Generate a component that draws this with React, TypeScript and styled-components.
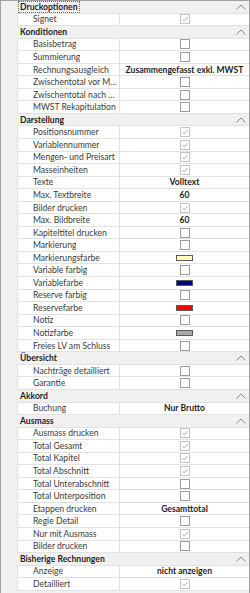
import React from 'react'
import styled, { createGlobalStyle } from 'styled-components'

const GlobalStyle = createGlobalStyle`
    html, body {
        margin: 0;
        padding: 0;
        background: #ffffff;
    }
`

type Kind = 'check' | 'text' | 'color'

interface Item {
    label: string;
    kind: Kind;
    checked?: boolean;
    text?: string;
    color?: string;
}

interface Category {
    title: string;
    focused?: boolean;
    items: Item[];
}

const check = (label: string, checked = false): Item => ({ label, kind: 'check', checked })
const text = (label: string, value: string): Item => ({ label, kind: 'text', text: value })
const color = (label: string, value: string): Item => ({ label, kind: 'color', color: value })

const categories: Category[] = [
    { title: 'Druckoptionen', focused: true, items: [check('Signet', true)] },
    {
        title: 'Konditionen',
        items: [
            check('Basisbetrag'),
            check('Summierung'),
            text('Rechnungsausgleich', 'Zusammengefasst exkl. MWST'),
            check('Zwischentotal vor MWST'),
            check('Zwischentotal nach MWST'),
            check('MWST Rekapitulation'),
        ],
    },
    {
        title: 'Darstellung',
        items: [
            check('Positionsnummer', true),
            check('Variablennummer', true),
            check('Mengen- und Preisart', true),
            check('Masseinheiten', true),
            text('Texte', 'Volltext'),
            text('Max. Textbreite', '60'),
            check('Bilder drucken', true),
            text('Max. Bildbreite', '60'),
            check('Kapiteltitel drucken'),
            check('Markierung'),
            color('Markierungsfarbe', '#ffffc0'),
            check('Variable farbig'),
            color('Variablefarbe', '#000080'),
            check('Reserve farbig'),
            color('Reservefarbe', '#ff0000'),
            check('Notiz'),
            color('Notizfarbe', '#a8a8a8'),
            check('Freies LV am Schluss'),
        ],
    },
    { title: 'Übersicht', items: [check('Nachträge detailliert'), check('Garantie')] },
    { title: 'Akkord', items: [text('Buchung', 'Nur Brutto')] },
    {
        title: 'Ausmass',
        items: [
            check('Ausmass drucken', true),
            check('Total Gesamt', true),
            check('Total Kapitel', true),
            check('Total Abschnitt', true),
            check('Total Unterabschnitt'),
            check('Total Unterposition'),
            text('Etappen drucken', 'Gesamttotal'),
            check('Regie Detail'),
            check('Nur mit Ausmass', true),
            check('Bilder drucken'),
        ],
    },
    {
        title: 'Bisherige Rechnungen',
        items: [text('Anzeige', 'nicht anzeigen'), check('Detailliert', true)],
    },
]

const Grid = styled.div`
    box-sizing: border-box;
    width: 250px;
    height: 593px;
    overflow: hidden;
    background: #f0f0f0;
    border: 1px solid #a0a0a0;
    border-bottom: none;
    font-family: Lato, "Open Sans", sans-serif;
    font-size: 8.6px;
`

const HeaderRow = styled.div`
    box-sizing: border-box;
    height: 12.55px;
    margin-left: 16px;
    padding: 0 3px 0 1px;
    display: flex;
    align-items: center;
    justify-content: space-between;
    border-bottom: 1px solid #e2e2e2;
`

const HeaderTitle = styled.span<{ $focused?: boolean }>`
    font-weight: 700;
    color: #1e1e1e;
    line-height: 10px;
    padding: 0 1px;
    border: 1px dotted ${p => (p.$focused ? '#6a6a6a' : 'transparent')};
`

const Row = styled.div`
    box-sizing: border-box;
    height: 12.55px;
    margin-left: 16px;
    display: grid;
    grid-template-columns: 101px 1fr;
    background: #ffffff;
    border-bottom: 1px solid #e2e2e2;
    border-left: 1px solid #e2e2e2;
`

const Label = styled.div`
    padding-left: 15px;
    display: flex;
    align-items: center;
    color: #3a3a3a;
    white-space: nowrap;
    overflow: hidden;
    min-width: 0;

    span {
        overflow: hidden;
        text-overflow: ellipsis;
    }
`

const Value = styled.div`
    display: flex;
    align-items: center;
    justify-content: center;
    border-left: 1px solid #e2e2e2;
    overflow: hidden;
    white-space: nowrap;
    min-width: 0;
`

const BoldValue = styled.span`
    font-weight: 700;
    color: #1e1e1e;
`

const Box = styled.span<{ $checked?: boolean }>`
    box-sizing: border-box;
    width: 10px;
    height: 10px;
    background: #ffffff;
    border: 1px solid ${p => (p.$checked ? '#c4c4c4' : '#9c9c9c')};
    display: flex;
    align-items: center;
    justify-content: center;
`

const Swatch = styled.span<{ $color: string }>`
    box-sizing: border-box;
    width: 17px;
    height: 6px;
    background: ${p => p.$color};
    border: 1px solid #5a5a5a;
`

function Chevron() {
    return (
        <svg width="10" height="6" viewBox="0 0 10 6">
            <polyline points="0.5,5.5 5,1 9.5,5.5" fill="none" stroke="#8a8a8a" strokeWidth="1" />
        </svg>
    )
}

function CheckBox({ checked }: { checked?: boolean }) {
    return (
        <Box $checked={checked}>
            {checked && (
                <svg width="8" height="8" viewBox="0 0 8 8">
                    <polyline points="1.5,4.2 3.2,5.8 6.5,2.2" fill="none" stroke="#a0a0a0" strokeWidth="0.9" />
                </svg>
            )}
        </Box>
    )
}

function ItemValue({ item }: { item: Item }) {
    if (item.kind === 'check') return <CheckBox checked={item.checked} />
    if (item.kind === 'color') return <Swatch $color={item.color ?? '#fff'} />
    return <BoldValue>{item.text}</BoldValue>
}

export default function App() {
    return (
        <>
            <GlobalStyle />
            <Grid>
                {categories.map(cat => (
                    <div key={cat.title}>
                        <HeaderRow>
                            <HeaderTitle $focused={cat.focused}>{cat.title}</HeaderTitle>
                            <Chevron />
                        </HeaderRow>
                        {cat.items.map(item => (
                            <Row key={cat.title + item.label}>
                                <Label><span>{item.label}</span></Label>
                                <Value><ItemValue item={item} /></Value>
                            </Row>
                        ))}
                    </div>
                ))}
            </Grid>
        </>
    )
}
